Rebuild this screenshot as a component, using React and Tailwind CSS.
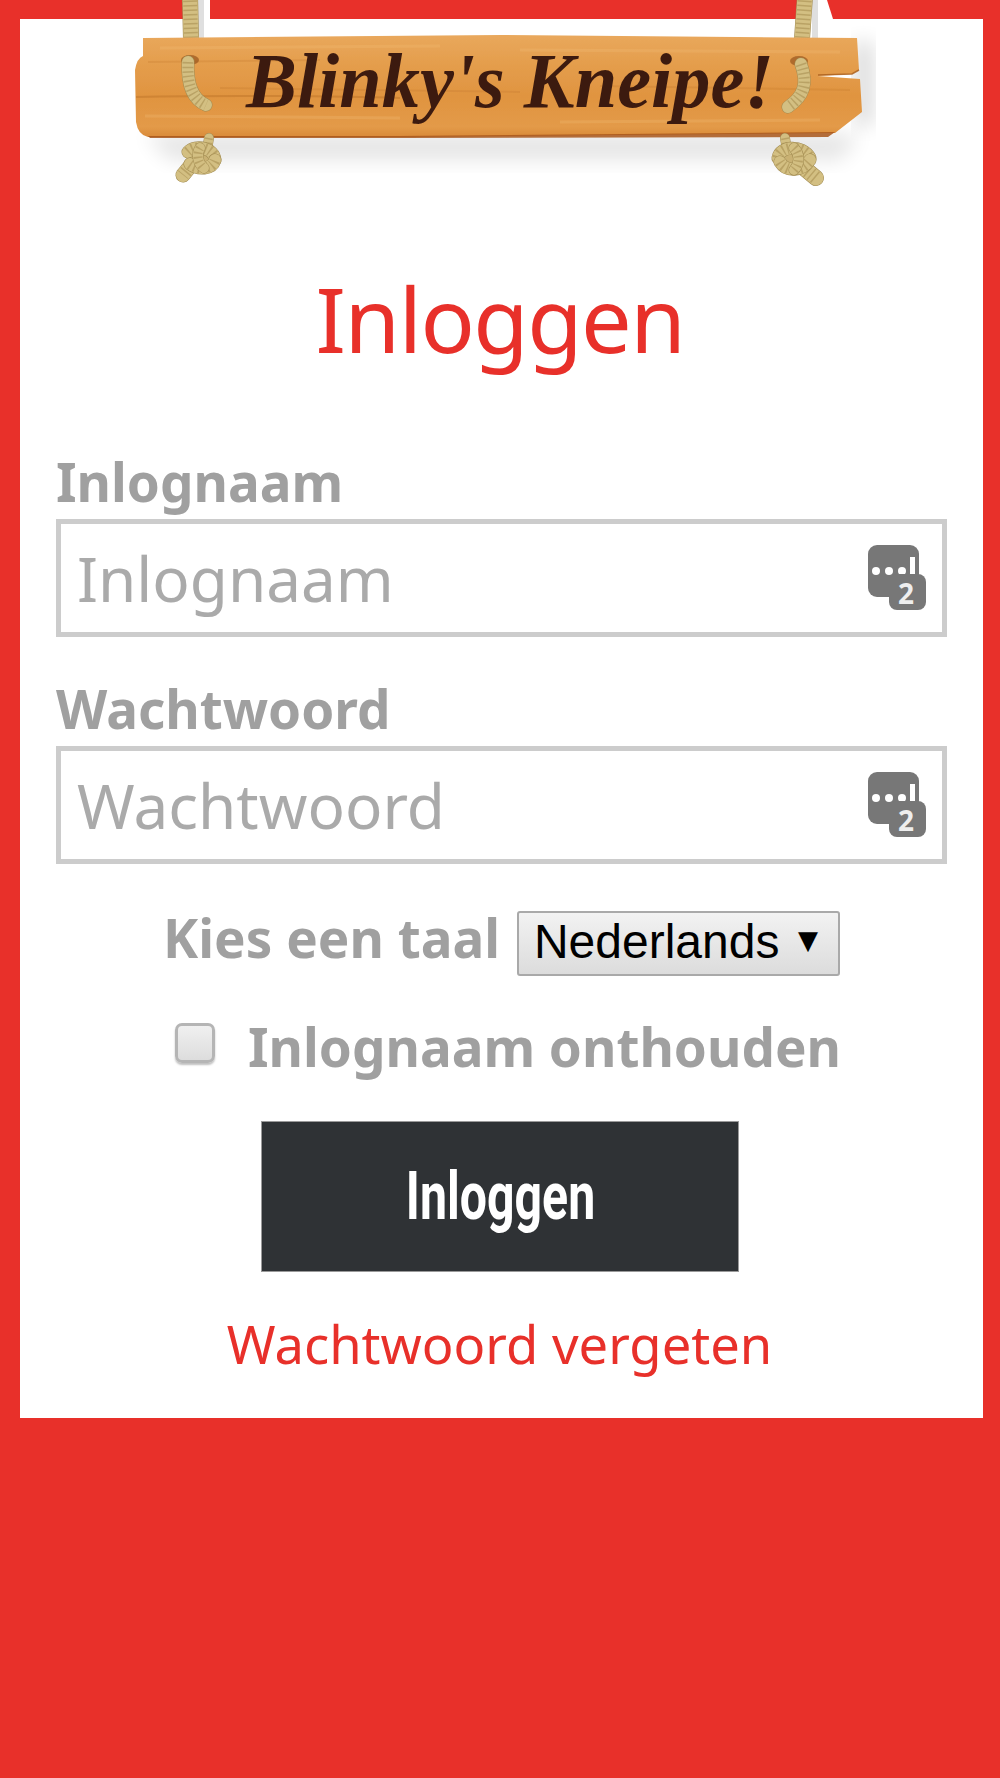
import React from "react";

const sans = "font-['Noto_Sans','Open_Sans',sans-serif]";

// twisted rope: base colour with a dashed darker twist on top
const Rope = ({ d, width = 11 }) => (
  <g fill="none" strokeLinecap="round">
    <path d={d} stroke="#a08a50" strokeWidth={width + 1} />
    <path d={d} stroke="#d3bf82" strokeWidth={width} />
    <path d={d} stroke="#a98f52" strokeWidth={width - 1} strokeDasharray="1.5 3" strokeLinecap="butt" opacity="0.6" />
  </g>
);

// hanging wooden sign at the top of the card
const SignLogo = () => (
  <svg className="block mx-auto -mt-[19px]" width="803" height="200" viewBox="0 0 803 200">
    <defs>
      <linearGradient id="wood" x1="0" y1="0" x2="0" y2="1">
        <stop offset="0" stopColor="#e9a85c" />
        <stop offset="0.3" stopColor="#e49d4c" />
        <stop offset="0.6" stopColor="#e09440" />
        <stop offset="0.9" stopColor="#e39a48" />
        <stop offset="1" stopColor="#d98a38" />
      </linearGradient>
      <filter id="soft" x="-20%" y="-50%" width="140%" height="200%">
        <feGaussianBlur stdDeviation="10" />
      </filter>
      <filter id="softer" x="-20%" y="-20%" width="140%" height="140%">
        <feGaussianBlur stdDeviation="0.5" />
      </filter>
    </defs>

    {/* white cut-outs of the sign picture over the red top */}
    <path d="M96 0H110V19H96Z" fill="#fff" />
    <path d="M708 0H727L733 19H708Z" fill="#fff" />
    <path d="M98 0H104V38H98Z" fill="#000" opacity="0.12" filter="url(#softer)" />
    <path d="M712 0H718V38H712Z" fill="#000" opacity="0.12" filter="url(#softer)" />

    {/* shadows */}
    <path d="M45 134H760L740 160H70Z" fill="#000" opacity="0.1" filter="url(#soft)" />
    <path d="M755 42H772L772 125H755Z" fill="#000" opacity="0.16" filter="url(#soft)" />

    {/* top ropes */}
    <Rope d="M90 -4L91 39" width={15} />
    <Rope d="M705 -4L702 39" width={15} />

    {/* board */}
    <path
      d="M43 38L400 35L757 38L759 70L752 74L718 76L760 79L762 112L735 133L300 137L48 137Q38 135 36 122L35 70Q37 58 43 56Z"
      fill="url(#wood)"
      filter="url(#softer)"
    />
    <path d="M718 75L752 74L759 70" stroke="#a85d1c" strokeWidth="1.5" fill="none" opacity="0.8" />
    <path d="M36 97C120 95 240 96 300 98" stroke="#bb7026" strokeWidth="2" fill="none" opacity="0.45" />
    <path d="M48 136L300 136L735 132L728 137L300 138L50 138Z" fill="#a8561a" opacity="0.85" />
    <g stroke="#f2bb73" strokeWidth="3" opacity="0.3" fill="none">
      <path d="M60 48L340 46" />
      <path d="M420 50L740 52" />
      <path d="M45 116L300 118" />
      <path d="M460 122L720 120" />
    </g>
    <g stroke="#b96d25" strokeWidth="2" opacity="0.2" fill="none">
      <path d="M120 88L420 92" />
      <path d="M500 86L750 90" />
      <path d="M48 62L220 60" />
    </g>

    {/* rope loops through the board */}
    <ellipse cx="90" cy="60" rx="9" ry="5" fill="#8a4a18" opacity="0.6" />
    <ellipse cx="699" cy="61" rx="9" ry="5" fill="#8a4a18" opacity="0.6" />
    <Rope d="M88 62C87 84 92 99 106 105" width={12} />
    <Rope d="M701 64C708 84 704 96 688 107" width={12} />

    {/* sign lettering */}
    <text
      x="146"
      y="107"
      textLength="528"
      lengthAdjust="spacingAndGlyphs"
      fontFamily="'Liberation Serif', serif"
      fontStyle="italic"
      fontWeight="700"
      fontSize="78"
      fill="#3c1a0f"
    >
      Blinky's Kneipe!
    </text>

    {/* knots */}
    <Rope d="M109 138L107 150" width={9} />
    <Rope d="M92 164L83 175" width={14} />
    <circle cx="101" cy="158" r="9" fill="#c9b173" />
    <Rope d="M88 152C96 144 114 148 115 160" width={12} />
    <Rope d="M90 164C98 170 112 170 115 160" width={12} />
    <Rope d="M100 148C96 154 98 164 104 168" width={10} />
    <Rope d="M685 138L687 150" width={9} />
    <Rope d="M704 168L716 178" width={15} />
    <circle cx="694" cy="158" r="9" fill="#c9b173" />
    <Rope d="M678 158C680 146 702 144 710 158" width={12} />
    <Rope d="M680 162C686 172 702 172 710 160" width={12} />
    <Rope d="M694 148C700 154 700 164 694 170" width={10} />
  </svg>
);

// two-step login badge that sits in the inputs
const KeyBadge = () => (
  <svg className="absolute right-[21px] top-[26px]" width="58" height="72" viewBox="0 0 58 72">
    <rect x="0" y="0" width="51" height="52" rx="9" fill="#777" />
    <circle cx="8" cy="26" r="4" fill="#fff" />
    <circle cx="21" cy="26" r="4" fill="#fff" />
    <circle cx="34" cy="26" r="4" fill="#fff" />
    <rect x="42" y="12" width="5" height="18" fill="#fff" />
    <rect x="21" y="29" width="37" height="36" rx="8" fill="#777" />
    <text x="38" y="59" textAnchor="middle" fontFamily="'Open Sans', sans-serif" fontWeight="700" fontSize="28" fill="#eee">
      2
    </text>
  </svg>
);

const Field = ({ label, id, type = "text" }) => (
  <div className="flex flex-col gap-[4px]">
    <label htmlFor={id} className="text-[53px] leading-[67px] font-bold text-[#a0a0a0]">
      {label}
    </label>
    <div className="relative">
      <input
        id={id}
        type={type}
        placeholder={label}
        className="block w-full h-[118px] border-[5px] border-[#cccccc] bg-white pl-[16px] pr-[90px] text-[62px] text-[#555] outline-none placeholder:text-[#aaaaaa]"
      />
      <KeyBadge />
    </div>
  </div>
);

export default function App() {
  return (
    <div className={`min-h-screen bg-[#e8302a] pt-[19px] pl-[20px] pr-[17px] pb-[360px] ${sans}`}>
      <div className="bg-white flex flex-col">
        <SignLogo />

        <h1 className="text-center text-[#e8302a] text-[90px] leading-[120px] tracking-[-1.5px] font-normal mt-[58px] pr-[3px]">
          Inloggen
        </h1>

        <form className="flex flex-col px-[36px] mt-[70px]">
          <div className="flex flex-col gap-[38px]">
            <Field label="Inlognaam" id="username" />
            <Field label="Wachtwoord" id="password" type="password" />
          </div>

          <div className="flex items-center justify-center gap-[17px] mt-[46px] h-[66px]">
            <label htmlFor="lang" className="text-[53px] leading-[66px] font-bold text-[#a0a0a0] -mt-[10px]">
              Kies een taal
            </label>
            <div className="relative w-[323px] h-[65px] overflow-hidden rounded-[3px] border-2 border-[#a9a9a9] bg-gradient-to-b from-[#f2f2f2] to-[#dcdcdc]">
              <select
                id="lang"
                defaultValue="nl"
                className="appearance-none block w-full h-[61px] -mt-[7px] bg-transparent pl-[15px] font-['Liberation_Sans',Arial,sans-serif] text-[48px] text-black outline-none"
              >
                <option value="nl">Nederlands</option>
              </select>
              <span className="absolute right-[20px] top-[7px] font-['DejaVu_Sans',sans-serif] text-[26px] leading-[40px] text-black pointer-events-none">
                ▼
              </span>
            </div>
          </div>

          <div className="flex items-center justify-center gap-[33px] mt-[38px] h-[66px] pl-[13px]">
            <input
              id="remember"
              type="checkbox"
              className="appearance-none shrink-0 size-[40px] -mt-[8px] rounded-[7px] border-[3px] border-[#b5b5b5] bg-gradient-to-b from-[#f0f0f0] to-[#dddddd] shadow-[0_2px_2px_rgba(0,0,0,0.25)]"
            />
            <label htmlFor="remember" className="text-[53px] leading-[66px] font-bold text-[#a0a0a0]">
              Inlognaam onthouden
            </label>
          </div>

          <button
            type="button"
            className="self-center mt-[41px] mr-[3px] w-[478px] h-[151px] bg-[#2f3235] border border-[#9a9a9a] text-white font-['Roboto',sans-serif] font-bold text-[67px] leading-none"
          >
            <span className="inline-block scale-x-[0.72]">Inloggen</span>
          </button>

          <a href="#" className="text-center text-[#e8302a] text-[52.5px] leading-[66px] mt-[39px] mb-[41px] pr-[4px]">
            Wachtwoord vergeten
          </a>
        </form>
      </div>
    </div>
  );
}
